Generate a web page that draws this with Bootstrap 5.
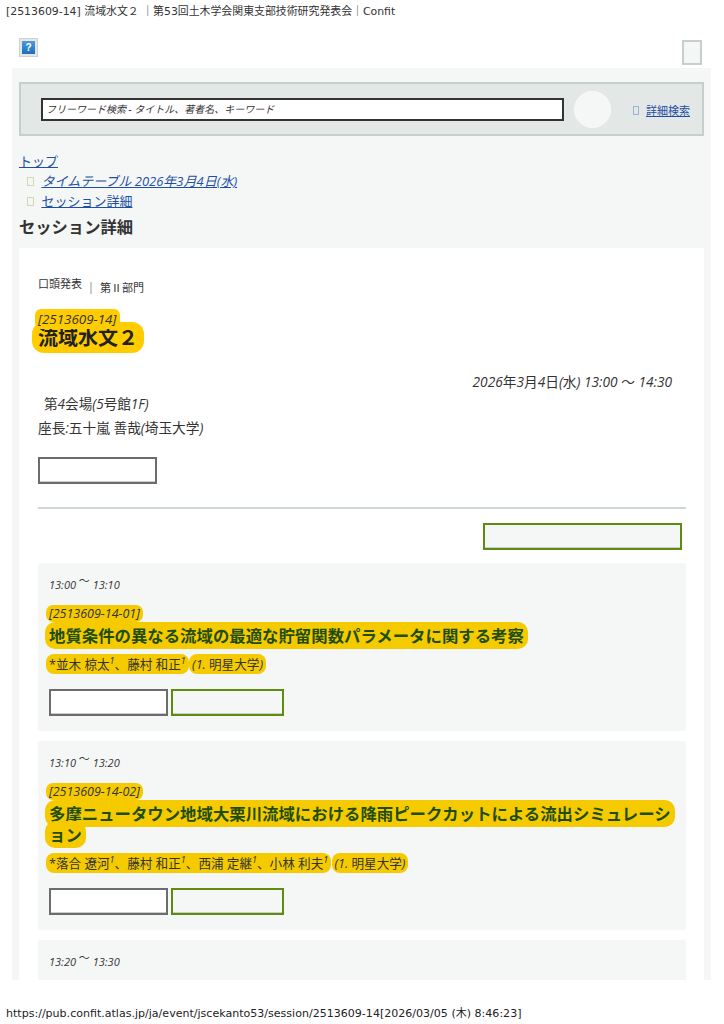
<!DOCTYPE html>
<html lang="ja">
<head>
  <meta charset="UTF-8">
  <meta name="viewport" content="width=device-width, initial-scale=1.0">
  <title>[2513609-14] 流域水文２ | Confit</title>
  <link href="https://cdn.jsdelivr.net/npm/bootstrap@5.3.0/dist/css/bootstrap.min.css" rel="stylesheet">
  <style>
    body {
      font-family: "Open Sans", "Noto Sans CJK JP", sans-serif;
      font-size: 13px;
      color: #333;
      background: #fff;
    }
    .print-page { height: 1024px; overflow: hidden; }
    .print-line {
      font-family: "DejaVu Sans", "Noto Sans CJK JP", sans-serif;
      font-size: 10.9px;
      color: #333;
      line-height: 14px;
      height: 14px;
      white-space: nowrap;
    }
    .page-title { margin: 5px 0 0 6px; }
    .print-url { margin: 0 0 3px 6px; color: #222; font-size: 11.05px; }
    .top-strip { height: 49px; padding: 19px 22px 0 19px; }
    .help-icon { width: 19px; height: 19px; background: #e3e7e6; border: 1px solid #ccd3d0; padding: 2px; }
    .help-icon span {
      display: block; height: 100%; background: linear-gradient(#4a9ae0, #1f6fb8); color: #fff;
      font: bold 10px/13px "Liberation Sans", sans-serif; text-align: center;
    }
    .menu-box { width: 20px; height: 25px; margin-top: 2px; background: #f5f7f6; border: 2px solid #c5d0cc; }
    .main-panel {
      flex: 1 1 0; min-height: 0; overflow: hidden;
      margin: 0 13px 27px 12px; padding: 14px 7px 0;
      background: #f5f7f6;
    }
    .search-bar {
      height: 54px; background: #e3e7e6; border: 2px solid #c5d0cc;
      padding: 0 12px 0 20px;
    }
    .search-input {
      width: 523px; height: 23px; border: 2px solid #333; background: #fff;
      font-size: 10px; font-style: italic; line-height: 19px; padding: 0 3px; color: #333;
    }
    .search-go { width: 37px; height: 37px; border-radius: 50%; background: #f5f7f6; border: 1px solid #fafbfa; margin-left: 10px; }
    .detail-link { font-size: 11px; margin-top: 5px; }
    .tofu { display: inline-block; width: 6px; height: 9px; border: 1px solid #9cb0d8; }
    .page-links a, .detail-link a { color: #1d4fa5; }
    .crumbs { margin-top: 15px; line-height: 20px; }
    .crumbs ul { list-style: none; padding: 0 0 0 8px; margin: 0; }
    .crumbs .tofu { width: 7px; height: 9px; border-color: #d3d9ae; margin-right: 4px; }
    .crumb-sub { font-style: italic; }
    .page-head { font-size: 16.3px; font-weight: 700; color: #333; margin: 4px 0 9px; line-height: 24px; }
    .white-card { background: #fff; padding: 28px 18px 0 19px; }
    .kind-row { font-size: 11px; line-height: 16px; height: 26px; }
    .kind-sep { width: 2px; height: 12px; background: #c5d0cc; margin: 6px 8px 0 8px; }
    .kind-part { margin-top: 4px; }
    .mark-y {
      -webkit-box-decoration-break: clone; box-decoration-break: clone;
      background: #f5cb00; border-radius: 9px; padding: 2px 4px; margin-left: -3px;
    }
    .sess-code { font-size: 13.4px; font-style: italic; line-height: 15px; margin-top: 10px; position: relative; z-index: 1; }
    .sess-code .mark-y { background: #fc0; padding: 1px 4px 1px 3px; border-radius: 6px; }
    .sess-name { font-size: 20px; font-weight: 700; line-height: 21px; color: #222; }
    .sess-name .mark-y { background: #fc0; padding: 2px 6px; border-radius: 12px; margin-left: -6px; }
    .sess-time { font-size: 13.7px; text-align: right; margin: 24px 14px 0 0; line-height: 20px; }
    .sess-room { margin: 2px 0 0 6px; line-height: 20px; font-size: 13.6px; }
    .sess-chair { margin-top: 4px; line-height: 20px; font-size: 13.7px; }
    .blank-btn { display: block; width: 119px; height: 27px; background: #fff; border: 2px solid #6c6c6c; box-shadow: inset 0 -1px 0 #ccc; }
    .green-btn { display: block; width: 113px; height: 27px; background: #f5f7f6; border: 2px solid #5f8c10; box-shadow: inset 0 -1px 0 #ccc; }
    .chair-btn { margin-top: 19px; }
    .rule-line { height: 2px; background: #cdd6d3; margin: 23px 0 14px; }
    .wide-btn { width: 199px; height: 27px; margin: 0 4px 0 auto; }
    .talk-list { margin-top: 13px; }
    .talk {
      background: #f5f7f6; padding: 12px 11px 15px; margin-bottom: 10px; border-radius: 2px;
    }
    .talk-time { font-style: italic; font-size: 11px; line-height: 20px; color: #333; }
    .talk-wave { font-style: normal; font-size: 11px; line-height: 0; vertical-align: 4px; }
    .talk-code { font-style: italic; font-size: 12.5px; line-height: 17px; margin-top: 10px; position: relative; z-index: 1; }
    .talk-code .mark-y { padding: 0 3px; border-radius: 7px; }
    .talk-name { font-size: 16.4px; font-weight: 700; line-height: 21px; color: #1f4d0e; margin-top: 3px; }
    .talk-name .mark-y { padding: 2px 4px; border-radius: 10px; margin-left: -4px; }
    .talk-auth { font-size: 12.6px; line-height: 20px; margin-top: 8px; color: #333; }
    .talk-auth .mark-y { padding: 1.5px 3px; border-radius: 8px; }
    .talk-auth sup { font-size: 9px; font-style: italic; top: -.5em; }
    .talk-actions { margin-top: 15px; gap: 3px; }
  </style>
</head>
<body>
  <div class="print-page d-flex flex-column">
    <div class="print-line page-title">[2513609-14] 流域水文２ ｜第53回土木学会関東支部技術研究発表会｜Confit</div>

    <div class="top-strip d-flex justify-content-between align-items-start">
      <div class="help-icon"><span>?</span></div>
      <div class="menu-box"></div>
    </div>

    <div class="main-panel">
      <!-- 検索 -->
      <div class="search-bar d-flex align-items-center">
        <div class="search-input">フリーワード検索 - タイトル、著者名、キーワード</div>
        <div class="search-go"></div>
        <div class="detail-link ms-auto page-links"><span class="tofu me-1"></span> <a href="#">詳細検索</a></div>
      </div>

      <!-- パンくず -->
      <div class="crumbs page-links">
        <a href="#">トップ</a>
        <ul>
          <li><span class="tofu"></span> <a href="#" class="crumb-sub">タイムテーブル 2026年3月4日(水)</a></li>
          <li><span class="tofu"></span> <a href="#">セッション詳細</a></li>
        </ul>
      </div>
      <h1 class="page-head">セッション詳細</h1>

      <div class="white-card">
        <div class="kind-row d-flex">
          <span>口頭発表</span><span class="kind-sep"></span><span class="kind-part">第Ⅱ部門</span>
        </div>
        <div class="sess-code"><span class="mark-y">[2513609-14]</span></div>
        <div class="sess-name"><span class="mark-y">流域水文２</span></div>
        <div class="sess-time"><i>2026</i>年<i>3</i>月<i>4</i>日<i>(</i>水<i>) 13:00</i> ～ <i>14:30</i></div>
        <div class="sess-room">第<i>4</i>会場<i>(5</i>号館<i>1F)</i></div>
        <div class="sess-chair">座長<i>:</i>五十嵐 善哉<i>(</i>埼玉大学<i>)</i></div>
        <span class="blank-btn chair-btn"></span>
        <div class="rule-line"></div>
        <span class="green-btn wide-btn"></span>

        <div class="talk-list">
          <div class="talk">
            <div class="talk-time">13:00 <span class="talk-wave">～</span> 13:10</div>
            <div class="talk-code"><span class="mark-y">[2513609-14-01]</span></div>
            <div class="talk-name"><span class="mark-y">地質条件の異なる流域の最適な貯留関数パラメータに関する考察</span></div>
            <div class="talk-auth"><span class="mark-y">*並木 椋太<sup>1</sup>、藤村 和正<sup>1</sup></span> <span class="mark-y"><i>(1.</i> 明星大学<i>)</i></span></div>
            <div class="talk-actions d-flex"><span class="blank-btn"></span><span class="green-btn"></span></div>
          </div>
          <div class="talk">
            <div class="talk-time">13:10 <span class="talk-wave">～</span> 13:20</div>
            <div class="talk-code"><span class="mark-y">[2513609-14-02]</span></div>
            <div class="talk-name"><span class="mark-y">多摩ニュータウン地域大栗川流域における降雨ピークカットによる流出シミュレーション</span></div>
            <div class="talk-auth"><span class="mark-y">*落合 遼河<sup>1</sup>、藤村 和正<sup>1</sup>、西浦 定継<sup>1</sup>、小林 利夫<sup>1</sup></span> <span class="mark-y"><i>(1.</i> 明星大学<i>)</i></span></div>
            <div class="talk-actions d-flex"><span class="blank-btn"></span><span class="green-btn"></span></div>
          </div>
          <div class="talk">
            <div class="talk-time">13:20 <span class="talk-wave">～</span> 13:30</div>
          </div>
        </div>
      </div>
    </div>

    <div class="print-line print-url">https://pub.confit.atlas.jp/ja/event/jscekanto53/session/2513609-14[2026/03/05 (木) 8:46:23]</div>
  </div>

  <script src="https://cdn.jsdelivr.net/npm/bootstrap@5.3.0/dist/js/bootstrap.bundle.min.js"></script>
</body>
</html>
